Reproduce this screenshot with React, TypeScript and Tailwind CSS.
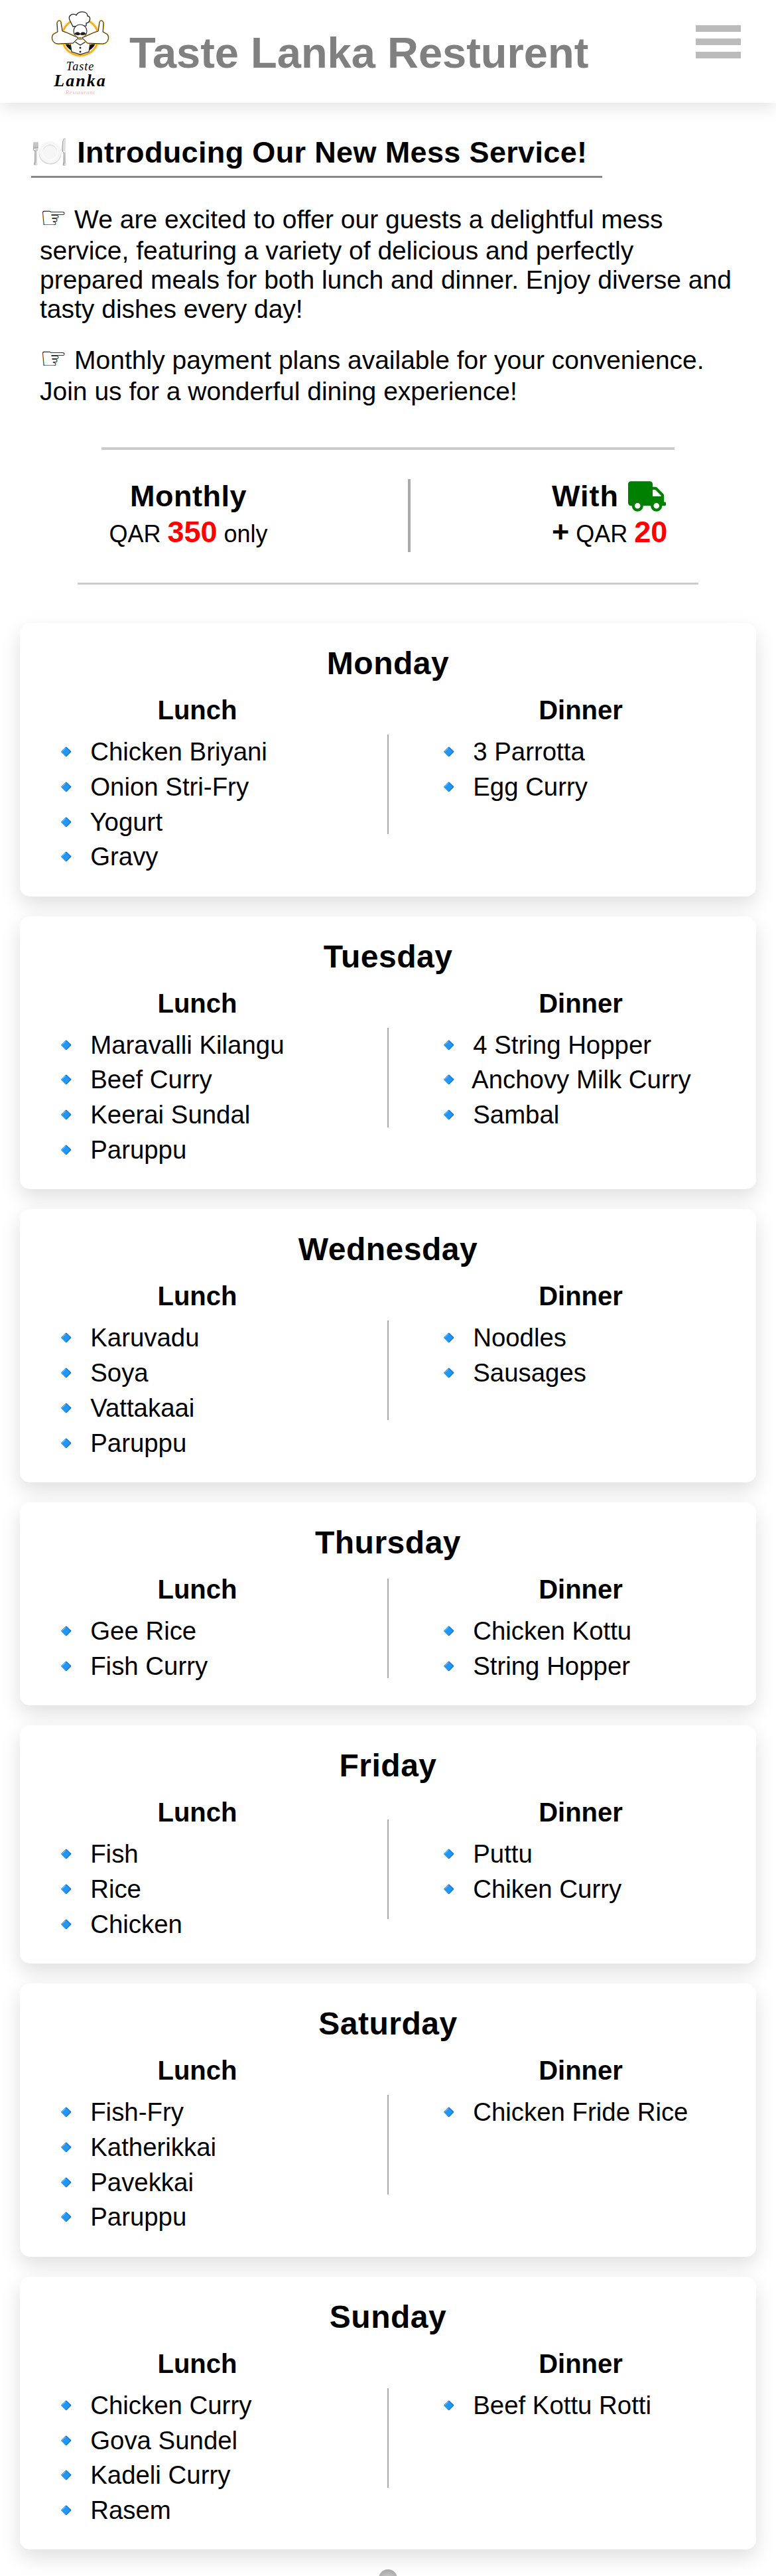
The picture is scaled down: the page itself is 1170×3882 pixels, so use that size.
import { FaTruck } from "react-icons/fa";

const menu = [
  { day: "Monday", lunch: ["Chicken Briyani", "Onion Stri-Fry", "Yogurt", "Gravy"], dinner: ["3 Parrotta", "Egg Curry"] },
  { day: "Tuesday", lunch: ["Maravalli Kilangu", "Beef Curry", "Keerai Sundal", "Paruppu"], dinner: ["4 String Hopper", "Anchovy Milk Curry", "Sambal"] },
  { day: "Wednesday", lunch: ["Karuvadu", "Soya", "Vattakaai", "Paruppu"], dinner: ["Noodles", "Sausages"] },
  { day: "Thursday", lunch: ["Gee Rice", "Fish Curry"], dinner: ["Chicken Kottu", "String Hopper"] },
  { day: "Friday", lunch: ["Fish", "Rice", "Chicken"], dinner: ["Puttu", "Chiken Curry"] },
  { day: "Saturday", lunch: ["Fish-Fry", "Katherikkai", "Pavekkai", "Paruppu"], dinner: ["Chicken Fride Rice"] },
  { day: "Sunday", lunch: ["Chicken Curry", "Gova Sundel", "Kadeli Curry", "Rasem"], dinner: ["Beef Kottu Rotti"] },
];

const Logo = () => {
  return (
    <div className="flex flex-col items-center w-[90px] shrink-0">
      <svg viewBox="0 0 90 72" className="w-[90px] h-[72px]">
        <circle cx="45" cy="41" r="31" fill="#fdf3dc" />
        <circle cx="45" cy="41" r="29" fill="#f2b01e" />
        <circle cx="45" cy="41" r="26" fill="#fff" />
        <path d="M19.5 44 A26 26 0 0 0 70.5 44 L45 66 Z" fill="#111" />
        <path d="M30 17 C24 8 35 4 39 8 C42 1 56 1 56 9 C62 10 60 19 54 20 L54 24 L34 25 Z" fill="#fff" stroke="#222" strokeWidth="1.3" />
        <ellipse cx="45" cy="32" rx="10" ry="10" fill="#fff" stroke="#222" strokeWidth="1.1" />
        <path d="M36 36 C40 32 43 33 45 36 C47 33 50 32 54 36 C50 39 47 38 45 37 C43 38 40 39 36 36 Z" fill="#222" />
        <path d="M29 43 L45 44 L61 43 L58 63 L45 67 L32 63 Z" fill="#fff" stroke="#222" strokeWidth="1.2" />
        <path d="M29 43 L45 53 L61 43" fill="none" stroke="#222" strokeWidth="1.4" />
        <circle cx="45" cy="57" r="1.5" fill="#222" />
        <circle cx="45" cy="63" r="1.5" fill="#222" />
        <path d="M11 51 C3 50 1 42 4 37 L11 33 L10 20 C11 15 16 15 16 20 L18 32 L24 34 L42 42 L34 50 Z" fill="#fff" stroke="#f2b01e" strokeWidth="2.4" paintOrder="stroke" />
        <path d="M11 51 C3 50 1 42 4 37 L11 33 L10 20 C11 15 16 15 16 20 L18 32 L24 34 L42 42 L34 50 Z" fill="none" stroke="#222" strokeWidth="1" />
        <path d="M79 51 C87 50 89 42 86 37 L79 33 L80 20 C79 15 74 15 74 20 L72 32 L66 34 L48 42 L56 50 Z" fill="#fff" stroke="#f2b01e" strokeWidth="2.4" paintOrder="stroke" />
        <path d="M79 51 C87 50 89 42 86 37 L79 33 L80 20 C79 15 74 15 74 20 L72 32 L66 34 L48 42 L56 50 Z" fill="none" stroke="#222" strokeWidth="1" />
      </svg>
      <div className="font-['Liberation_Serif',serif] italic text-black text-center">
        <div className="text-[18px] leading-[18px] mt-[4px] tracking-[1px]">Taste</div>
        <div className="text-[26px] leading-[26px] font-bold tracking-[2px]">Lanka</div>
        <div className="text-[9px] leading-[9px] text-[#f3b6bd] tracking-[0.5px]">Restaurant</div>
      </div>
    </div>
  );
};

const DishList = ({ items }: { items: string[] }) => {
  return (
    <ul className="mt-[13px]">
      {items.map((item) => (
        <li key={item} className="h-[52.8px] leading-[52.8px] whitespace-nowrap">
          <span className="mr-[1.5px]">🔹</span> {item}
        </li>
      ))}
    </ul>
  );
};

const DayCard = ({ day, lunch, dinner }: { day: string; lunch: string[]; dinner: string[] }) => {
  return (
    <section className="rounded-[15px] bg-white shadow-[0_12px_30px_rgba(0,0,0,0.13)] pt-[31px] pb-[32.5px]">
      <h3 className="text-center text-[48px] leading-[60px] font-bold tracking-[0.5px]">{day}</h3>
      <div className="flex mt-[16px]">
        <div className="w-[554px] pl-[46px]">
          <h4 className="text-center text-[40px] leading-[48px] font-bold pr-[65px]">Lunch</h4>
          <DishList items={lunch} />
        </div>
        <div className="self-center w-[2px] h-[150px] bg-[#aaaaaa]" />
        <div className="flex-1 pl-[67px]">
          <h4 className="text-center text-[40px] leading-[48px] font-bold pr-[42px]">Dinner</h4>
          <DishList items={dinner} />
        </div>
      </div>
    </section>
  );
};

export default function App() {
  return (
    <div className="h-[3882px] overflow-hidden bg-white text-black font-['Liberation_Sans',Arial,sans-serif]">
      <header className="flex items-start h-[155px] bg-white shadow-[0_8px_24px_rgba(0,0,0,0.1)] pl-[76px] pt-[15px]">
        <Logo />
        <h1 className="ml-[29px] mt-[25px] text-[65px] leading-[80px] font-bold text-[#808080]">Taste Lanka Resturent</h1>
        <div className="ml-auto mr-[53px] mt-[23px] flex flex-col gap-[10px]">
          <span className="block w-[68px] h-[10px] bg-[#bbbbbb]" />
          <span className="block w-[68px] h-[10px] bg-[#bbbbbb]" />
          <span className="block w-[68px] h-[10px] bg-[#bbbbbb]" />
        </div>
      </header>

      <main className="pt-[40px]">
        <h2 className="ml-[47px] w-[861px] border-b-[3px] border-[#888888] text-[45px] leading-[70px] font-bold tracking-[0.35px]">
          🍽️ Introducing Our New Mess Service!
        </h2>
        <div className="px-[60px] mt-[32px] text-[39px] leading-[44px]">
          <p><span className="font-['DejaVu_Sans'] text-[46px] leading-[56px]">☞</span> We are excited to offer our guests a delightful mess service, featuring a variety of delicious and perfectly prepared meals for both lunch and dinner. Enjoy diverse and tasty dishes every day!</p>
          <p className="mt-[24px]"><span className="font-['DejaVu_Sans'] text-[46px] leading-[56px]">☞</span> Monthly payment plans available for your convenience. Join us for a wonderful dining experience!</p>
        </div>

        <div className="mx-[153px] mt-[62px] border-t-4 border-[#cccccc]">
          <div className="flex items-center mt-[44px] h-[110px]">
            <div className="w-[262px] text-center -mt-[3px]">
              <div className="text-[45px] leading-[56px] font-bold tracking-[0.5px]">Monthly</div>
              <div className="text-[36px] leading-[52px]">QAR <b className="text-[45px] text-[#ff0000]">350</b> only</div>
            </div>
            <div className="ml-[200px] w-[4px] h-[110px] bg-[#aaaaaa]" />
            <div className="ml-[213px] -mt-[3px]">
              <div className="flex items-center text-[45px] leading-[56px] font-bold tracking-[1px]">With <FaTruck className="ml-[14px] w-[57px] h-[46px] text-[#008000]" /></div>
              <div className="text-[36px] leading-[52px]"><b className="text-[45px]">+</b> QAR <b className="text-[45px] text-[#ff0000]">20</b></div>
            </div>
          </div>
        </div>
        <div className="mx-[117px] mt-[46px] border-t-[3px] border-[#cccccc]" />

        <div className="mx-[30px] mt-[58px] flex flex-col gap-[30px] text-[38.4px]">
          {menu.map((m) => (
            <DayCard key={m.day} day={m.day} lunch={m.lunch} dinner={m.dinner} />
          ))}
        </div>
      </main>

      <div className="flex justify-center mt-[30px]">
        <div className="w-[28px] h-[28px] rounded-full bg-[radial-gradient(circle_at_50%_70%,#dddddd,#999999)]" />
      </div>
    </div>
  );
}
